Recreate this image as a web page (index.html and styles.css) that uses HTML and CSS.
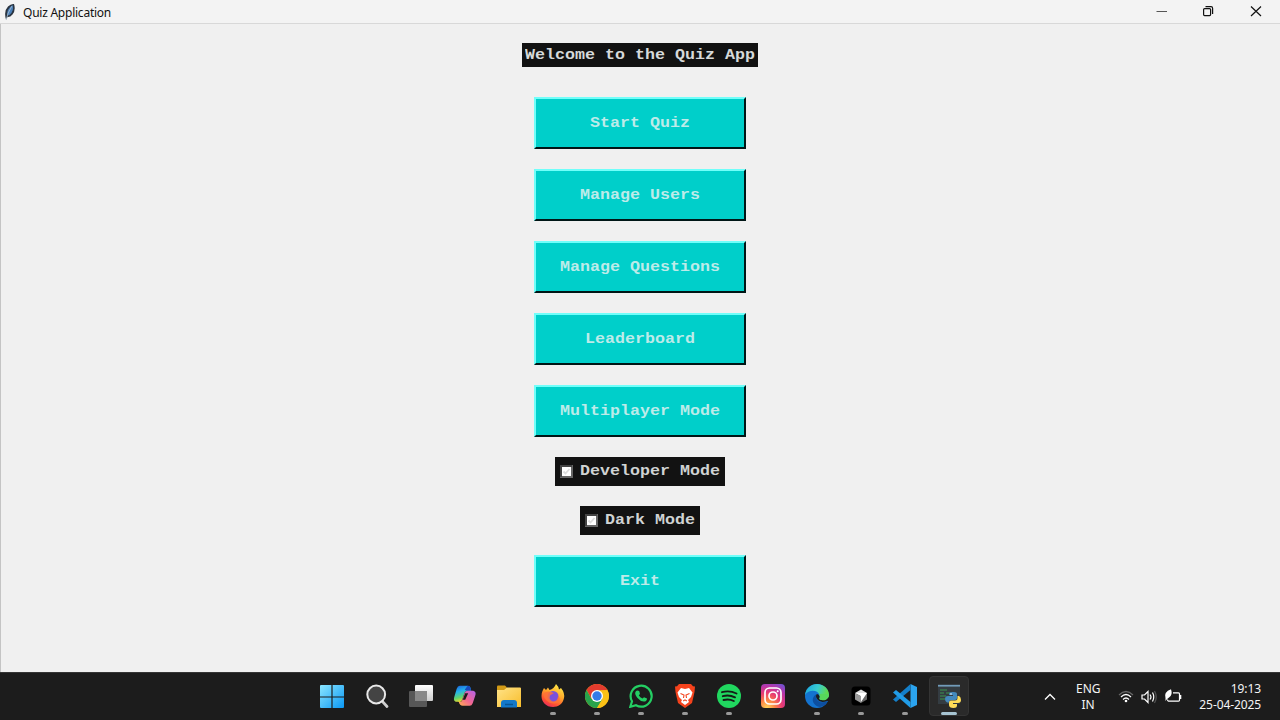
FILE: index.html
```html
<!DOCTYPE html>
<html lang="en">
<head>
<meta charset="utf-8">
<title>Quiz Application</title>
<link rel="stylesheet" href="styles.css">
</head>
<body>
<div class="desktop">
  <header class="titlebar">
    <svg class="feather" viewBox="0 0 12 18"><path d="M2 16.500Q-.5 8 4 3.500Q7 .5 10 1Q12 7 8.500 11.500Q6 14.500 3.500 14Z" fill="#2a3440"/><path d="M3.200 12.500Q2.500 6 8.500 2Q10.500 7.500 5.500 12Z" fill="#4a7fb8"/><path d="M2.200 17Q3.200 10 8 3" fill="none" stroke="#a9c0d2" stroke-width=".8"/></svg>
    <span class="title">Quiz Application</span>
    <div class="controls">
      <svg viewBox="0 0 46 23"><path d="M17.500 11.500H28" stroke="#555"/></svg>
      <svg viewBox="0 0 46 23" fill="none" stroke="#111" stroke-width="1.200"><rect x="17.600" y="8.600" width="7" height="7" rx="1"/><path d="M19.500 6.600H25Q26.600 6.600 26.600 8.200V14"/></svg>
      <svg viewBox="0 0 46 23"><path d="M18 6.500L28 16M28 6.500L18 16" stroke="#111" stroke-width="1.200"/></svg>
    </div>
  </header>
  <main class="content">
    <h1 class="banner"><span class="label">Welcome to the Quiz App</span></h1>
    <button class="btn"><span class="label">Start Quiz</span></button>
    <button class="btn"><span class="label">Manage Users</span></button>
    <button class="btn"><span class="label">Manage Questions</span></button>
    <button class="btn"><span class="label">Leaderboard</span></button>
    <button class="btn"><span class="label">Multiplayer Mode</span></button>
    <label class="check"><svg class="box" viewBox="0 0 13 13"><rect width="13" height="13" fill="#666"/><path d="M1 12V1H12" fill="none" stroke="#444" stroke-width="2"/><rect x="2" y="2" width="9" height="9" fill="#fff"/><path d="M3.500 6.500L5.500 8.500L9.500 4" fill="none" stroke="#ddd" stroke-width="1.800"/></svg><span class="label">Developer Mode</span></label>
    <label class="check"><svg class="box" viewBox="0 0 13 13"><rect width="13" height="13" fill="#666"/><path d="M1 12V1H12" fill="none" stroke="#444" stroke-width="2"/><rect x="2" y="2" width="9" height="9" fill="#fff"/><path d="M3.500 6.500L5.500 8.500L9.500 4" fill="none" stroke="#ddd" stroke-width="1.800"/></svg><span class="label">Dark Mode</span></label>
    <button class="btn"><span class="label">Exit</span></button>
  </main>
  <footer class="taskbar">
    <div class="apps">
      <div class="app"><svg viewBox="0 0 24 24"><defs><linearGradient id="win" x2="1" y2="1" gradientUnits="userSpaceOnUse" gradientTransform="scale(24)"><stop stop-color="#8ee8ff"/><stop offset="1" stop-color="#0a98f5"/></linearGradient></defs><path d="M0 2Q0 1 1 1H11.400V12.400H0ZM12.600 1H23Q24 1 24 2V12.400H12.600ZM0 13.600H11.400V24H1Q0 24 0 23ZM12.600 13.600H24V23Q24 24 23 24H12.600Z" fill="url(#win)"/></svg></div>
      <div class="app"><svg viewBox="0 0 24 24"><path d="M17 17L22 22.500" stroke="#cfcfcf" stroke-width="2.700" stroke-linecap="round"/><circle cx="11.200" cy="10.500" r="8.900" fill="#444" stroke="#e8e8e8" stroke-width="2"/></svg></div>
      <div class="app"><svg viewBox="0 0 24 24"><defs><linearGradient id="tv" x2="0" y2="1"><stop stop-color="#fff"/><stop offset="1" stop-color="#ccc"/></linearGradient></defs><rect x="6" y="1" width="18" height="16" rx="1" fill="url(#tv)"/><rect x="0" y="7" width="18" height="16" rx="1" fill="#5c5c5c" opacity=".92"/><path d="M6 7H18V17H6Z" fill="#888"/></svg></div>
      <div class="app"><svg viewBox="0 0 24 24"><defs><linearGradient id="cp1" x1="0" y1="0" x2=".3" y2="1"><stop stop-color="#1c5bd9"/><stop offset=".4" stop-color="#24b3ed"/><stop offset=".75" stop-color="#60d66b"/><stop offset="1" stop-color="#f5d62c"/></linearGradient><linearGradient id="cp2" x1="1" y1="0" x2="0" y2="1"><stop stop-color="#b263ec"/><stop offset=".55" stop-color="#f26691"/><stop offset="1" stop-color="#ffb04f"/></linearGradient></defs><g transform="translate(-.3 .8)"><path d="M7 1H15Q17.500 1 18 4L18.500 6H15Q12.500 6 11.500 9L9.500 15Q8.500 18 5.500 17H3Q.5 16 1.500 12.500L4 4Q5 1 7 1Z" fill="url(#cp1)"/><path d="M15 1Q17.500 1 18 4L18.500 6H14L12 5Z" fill="#1849be"/><path d="M17 21H10Q7 21 6 17Q9 18 10 14L12 8Q13 5.500 16 6H20.500Q24 7 22.500 11L20 18.500Q19 21 17 21Z" fill="url(#cp2)"/><path d="M12.500 8.500H15.500L12.500 15H10Z" fill="#1c1c1c"/></g></svg></div>
      <div class="app"><svg viewBox="0 0 24 24"><defs><linearGradient id="fold" x2="1" y2="1"><stop stop-color="#ffe388"/><stop offset="1" stop-color="#f8bd2b"/></linearGradient></defs><path d="M0 6V2.500Q0 1.500 1 1.500H8L10 3.500V7H0Z" fill="#d29a16"/><path d="M0 6H7L10 3.500H23Q24 3.500 24 4.500V23H0Z" fill="url(#fold)"/><path d="M4 23.500V19Q4 16 7 16H17Q20 16 20 19V23.500Z" fill="#1378c9"/><path d="M8 20.500H16" stroke="#075595" stroke-width="1.500"/></svg></div>
      <div class="app open"><svg viewBox="0 0 24 24"><defs><linearGradient id="ff" x1=".8" y1="0" x2=".3" y2="1"><stop stop-color="#fff24a"/><stop offset=".45" stop-color="#ffa62a"/><stop offset=".8" stop-color="#ff4f32"/><stop offset="1" stop-color="#e52c60"/></linearGradient></defs><path d="M15 0Q18 3 18 5.500L20 4Q24 9 23 14C22 20 17 23 12 23C5 23 .5 18 .5 12C.5 8 2 6 3 4L5 6L7 3.500L8.500 6Q13 5 15 0Z" fill="url(#ff)"/><circle cx="12" cy="12.500" r="5.500" fill="#7950dc"/><path d="M3 9Q7 6 13 9L9 11.500Q7.500 16 12 17.500Q17 17 17 12Q20 14 18 18Q11 22 5 16Q2 13 3 9" fill="#ff7138" opacity=".85"/></svg></div>
      <div class="app open"><svg viewBox="0 0 24 24"><circle cx="12" cy="12" r="12" fill="#fbc116"/><path d="M1.600 6A12 12 0 0 1 22.400 6L12 6.500L6.500 15Z" fill="#e33b2e"/><path d="M1.600 6A12 12 0 0 0 12 24L17.500 15L6.500 15Z" fill="#29a34c"/><path d="M12 6.500H22.600A12 12 0 0 1 12 24L17.500 15Z" fill="#fbc116"/><circle cx="12" cy="12" r="6" fill="#fff"/><circle cx="12" cy="12" r="4.700" fill="#347be8"/></svg></div>
      <div class="app open"><svg viewBox="0 0 24 24"><path d="M1.300 22.800L3 17.300A10.500 10.500 0 1 1 7 21.300Z" fill="none" stroke="#24cf63" stroke-width="2.200"/><path d="M8.200 6.500L10.200 7L11 10L9.800 11.200Q11 13.500 13.500 14.500L15 13.300L18 14.500Q18 17.600 14.800 17.600Q11.500 17.500 8.500 14Q5.500 10.500 6.400 8Q7 6.500 8.200 6.500Z" fill="#24cf63"/></svg></div>
      <div class="app open"><svg viewBox="0 0 24 24"><path d="M6 0H18L20 2.300L22 2.500L21.500 8L19 19L12 24L5 19L2.500 8L2 2.500L4 2.300Z" fill="#f4421c"/><path d="M8 4L12 5L16 4L19.500 8.500L18 13L15 16L16 18L12 21L8 18L9 16L6 13L4.500 8.500Z" fill="#fff"/><path d="M7.500 9.500L11 11L10.500 14M16.500 9.500L13 11L13.500 14M10.200 17L12 15.800L13.800 17" fill="none" stroke="#f4421c" stroke-width="1.100"/></svg></div>
      <div class="app open"><svg viewBox="0 0 24 24"><circle cx="12" cy="12" r="12" fill="#20d75f"/><path d="M5 8.200Q12.500 6 19.500 9.500M5.800 12.200Q12 10.500 18 13.300M6.500 16Q12 14.500 16.800 17" fill="none" stroke="#151c17" stroke-width="1.900" stroke-linecap="round"/></svg></div>
      <div class="app"><svg viewBox="0 0 24 24"><defs><radialGradient id="ig" cx=".25" cy="1" r="1.150"><stop stop-color="#ffd65b"/><stop offset=".3" stop-color="#fb8045"/><stop offset=".55" stop-color="#e93b72"/><stop offset=".8" stop-color="#b735aa"/><stop offset="1" stop-color="#7650cf"/></radialGradient></defs><rect width="24" height="24" rx="4" fill="url(#ig)"/><rect x="4" y="4" width="16" height="16" rx="4.500" fill="none" stroke="#fff" stroke-width="1.700"/><circle cx="12" cy="12" r="4" fill="none" stroke="#fff" stroke-width="1.700"/><circle cx="16.700" cy="7.300" r="1" fill="#fff"/></svg></div>
      <div class="app open"><svg viewBox="0 0 24 24"><defs><linearGradient id="ed" x2="1" y2=".3"><stop stop-color="#17a4df"/><stop offset=".55" stop-color="#39cbd0"/><stop offset="1" stop-color="#62dc48"/></linearGradient></defs><circle cx="12" cy="12" r="12" fill="#1473cf"/><path d="M0 11C1 4 6 0 12 0C19 0 24 5 24 11C24 15 20 17 16.500 16C13 15.500 15.500 14 14.500 11C13 6 4 5 0 11Z" fill="url(#ed)"/><path d="M10 11C5 16 9 22 15 23C20 22 22 19 22.500 17Q15 20.500 11.500 15Q10 13 12 10Z" fill="#0d4fa0"/><path d="M12 10Q10 12 12 15Q15 19.500 22 17L24 17V12Q22 16 17 16Q13 15.500 14.800 13Q14 10 12 10Z" fill="#1c1c1c"/><path d="M14.500 10H24V11C24 15 20 17 16.500 16Q13 15.500 15 13Z" fill="#57d85b"/></svg></div>
      <div class="app open"><svg viewBox="0 0 24 24"><rect x="2.500" y="2.500" width="19" height="19" rx="3.500" fill="#000"/><path d="M12 5.500L18 9L12 12L6 9Z" fill="#ddd"/><path d="M6 9L12 12V19L6 15.500Z" fill="#999"/><path d="M18 9V15.500L12 19V12Z" fill="#666"/><path d="M6.500 9H18L12 18V12Z" fill="#fff"/></svg></div>
      <div class="app open"><svg viewBox="0 0 24 24"><path d="M17.500 0L24 3V21L17.500 24Z" fill="#2ba4ef"/><path d="M17.500 6L3 18L0 15.500L17.500 0Z" fill="#147fc9"/><path d="M17.500 18L3 6L0 8.500L17.500 24Z" fill="#219ce7"/></svg></div>
      <div class="app open active"><svg viewBox="0 0 24 24"><rect x="1" y="1" width="22" height="19" fill="#343c42"/><path d="M1 1.700H23" stroke="#729bb9" stroke-width="1.800"/><path d="M3 6H10M3 9H7M9 9H13M3 12H9M3 15H8" stroke="#38784b" stroke-width="1.300"/><path d="M15.500 8Q20 7.500 20 10V14Q20 16 18 16H14Q12 16 12 18.500H10Q8 18 8 15Q8 12 11 12H16V11H12V10Q12 8 15.500 8Z" fill="#4389bd"/><path d="M20.500 12H22Q24 13 24 16Q24 19 21 19H16V20H20V21.500Q20 24 16.500 24Q12 24 12 21V18.500Q12 16.500 14 16.500H18Q20.500 16.500 20.500 14Z" fill="#ffdc58"/><circle cx="14" cy="10" r=".8" fill="#fff"/></svg></div>
    </div>
    <div class="tray">
      <svg class="chevron" viewBox="0 0 12 8"><path d="M1 6.500L6 1.500L11 6.500" fill="none" stroke="#fff" stroke-width="1.300"/></svg>
      <div class="lang">ENG<br>IN</div>
      <svg class="status" viewBox="0 0 64 16" fill="none" stroke="#fff" stroke-width="1.200"><path d="M1 6Q8-1 15 6" stroke="#666"/><path d="M3 8Q8 3 13 8M5 10.500Q8 7.500 11 10.500"/><circle cx="8" cy="12" r="1.300" fill="#fff" stroke="none"/><path d="M24 6H26.500L30 2.500V13.500L26.500 10H24ZM32 5.500Q34 8 32 10.500M34.500 3.500Q37 8 34.500 12.500"/><path d="M36.500 2Q40 8 36.500 14" stroke="#555"/><path d="M55 3.800H60.500Q61.500 3.800 61.500 5V11Q61.500 12.200 60.500 12.200H50.500Q49.500 12 49.500 10.500"/><path d="M62.500 6V10" stroke-width="1.600"/><path d="M47.500 9Q45.500 3 53 .2Q55 6 51 8.500Q49 9.500 47.500 12Z" fill="#fff" stroke="none"/></svg>
      <div class="clock">19:13<br>25-04-2025</div>
    </div>
  </footer>
</div>
</body>
</html>
```
FILE: styles.css
```css
* { box-sizing: border-box; }
body { margin: 0; }
.desktop {
  display: flex;
  flex-direction: column;
  width: 1280px;
  height: 720px;
  overflow: hidden;
  background: #f0f0f0;
}
.titlebar {
  display: flex;
  align-items: center;
  height: 24px;
  padding-left: 4px;
  background: #f3f3f3;
  border-bottom: 1px solid #d8d8d8;
  font: 12px "Noto Sans", sans-serif;
  color: #111;
}
.feather { width: 12px; height: 18px; }
.title { margin-left: 7px; padding-top: 1px; letter-spacing: -0.24px; }
.controls { display: flex; margin-left: auto; }
.controls svg { width: 46px; height: 23px; margin-right: 1px; }
.content {
  display: flex;
  flex: 1;
  flex-direction: column;
  align-items: center;
  gap: 20px;
  padding: 19.4px 1px 0 0;
  border-left: 1px solid #c4c4c4;
  font: bold 16.6667px "Liberation Mono", monospace;
}
/* Wide, low letterforms on a 10px character grid */
.label { display: inline-block; transform: scaleY(0.88); white-space: nowrap; }
.banner {
  width: 236px;
  height: 24px;
  margin: 0 0 10px;
  padding-left: 3px;
  background: #121212;
  color: #d6d9d9;
  font: inherit;
  line-height: 24px;
}
.btn {
  flex: none;
  width: 212px;
  height: 52px;
  padding: 0;
  border: 2px solid;
  border-color: #70fffa #001616 #001616 #70fffa;
  border-radius: 0;
  background: #00cfca;
  color: #bdebe9;
  font: inherit;
}
.check {
  display: flex;
  flex: none;
  align-items: center;
  height: 29px;
  padding: 0 5px 1px;
  background: #121212;
  color: #d0d3d3;
}
.box { width: 13px; height: 13px; margin: 1px 7px 0 0; }
.taskbar {
  display: flex;
  height: 48px;
  padding-left: 312px;
  border-top: 1px solid #353535;
  background: #1c1c1c;
}
.apps { display: flex; gap: 4px; padding-top: 3px; }
.app {
  display: flex;
  flex-direction: column;
  align-items: center;
  width: 40px;
  height: 40px;
  padding-top: 7px;
  border: 1px solid transparent;
  border-radius: 4px;
}
.app:first-child { margin-right: 1px; }
.app svg { width: 24px; height: 24px; }
.apps { margin-left: 0; }
.open::after {
  width: 6px;
  height: 3px;
  margin-top: 4px;
  border-radius: 2px;
  background: #999;
  content: "";
}
.active { border-color: #343434; background: #2a2a2a; }
.active::after { width: 16px; background: #a7c4d2; }
.tray {
  display: flex;
  align-items: center;
  margin-left: auto;
  padding-right: 19px;
  color: #f4f4f4;
  font: 12px/16px "Noto Sans", sans-serif;
}
.chevron { width: 12px; height: 8px; margin-right: 20px; }
.lang { width: 24px; text-align: center; }
.status { width: 64px; height: 16px; margin: 0 17px 0 18px; }
.clock { width: 62px; text-align: right; white-space: nowrap; letter-spacing: -0.1px; }
```
